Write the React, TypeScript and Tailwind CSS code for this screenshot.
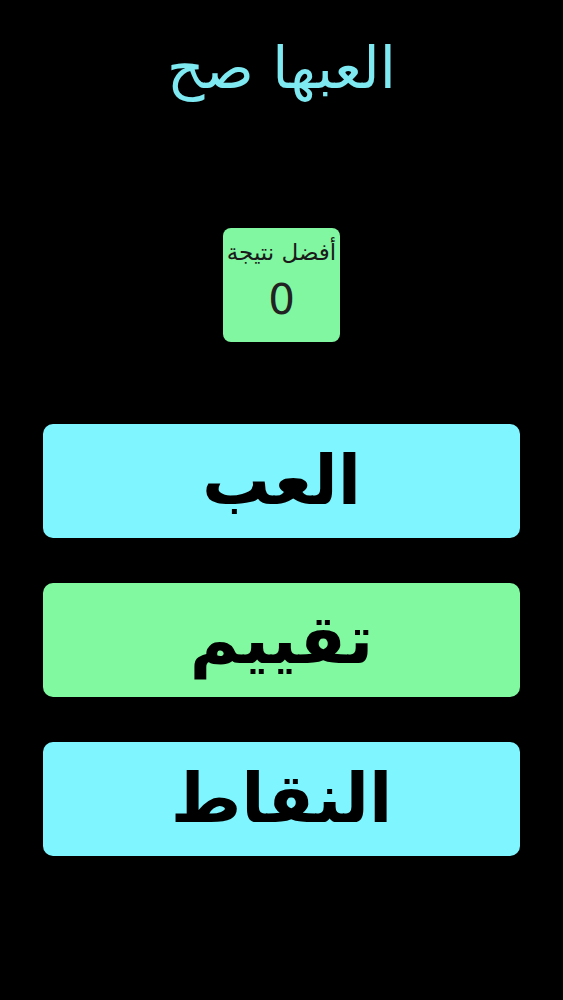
import React from 'react';

const buttons = [
  { label: 'العب', bg: 'bg-[#7ff6ff]' },
  { label: 'تقييم', bg: 'bg-[#80f9a0]' },
  { label: 'النقاط', bg: 'bg-[#7ff6ff]' },
];

export default function App() {
  return (
    <div
      dir="rtl"
      className="min-h-[1000px] w-full bg-black flex flex-col items-center"
      style={{ fontFamily: '"DejaVu Sans", "Noto Sans", sans-serif' }}
    >
      {/* Title */}
      <h1 className="mt-[36px] h-[64px] text-[58px] leading-[64px] font-normal text-[#7fe9f2]">
        العبها صح
      </h1>

      {/* Best score */}
      <div className="mt-[128px] w-[117px] h-[114px] rounded-lg bg-[#80f7a0] flex flex-col items-center pt-[8px]">
        <span className="text-[23px] leading-[32px] text-[#1a1a1a] whitespace-nowrap">أفضل نتيجة</span>
        <span className="mt-[8px] text-[42px] leading-[48px] text-[#222]">0</span>
      </div>

      {/* Menu */}
      <div className="mt-[82px] w-[477px] flex flex-col gap-[45px]">
        {buttons.map((b) => (
          <button
            key={b.label}
            className={`${b.bg} h-[114px] w-full rounded-[10px] flex items-center justify-center text-[68px] font-bold text-black`}
          >
            {b.label}
          </button>
        ))}
      </div>
    </div>
  );
}
